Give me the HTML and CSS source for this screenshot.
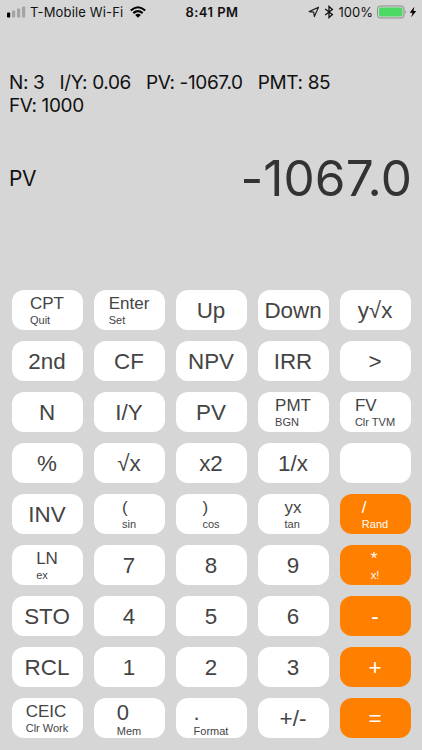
FILE: index.html
```html
<!DOCTYPE html>
<html lang="en">
<head>
<meta charset="utf-8">
<title>Calculator</title>
<link rel="stylesheet" href="styles.css">
</head>
<body>
<header class="status">
  <div class="side">
    <svg class="signal" width="20" height="12" viewBox="0 0 20 12"><rect x="1" y="6.5" width="3.2" height="5" rx=".8"/><g fill="#a4a4a4"><rect x="6" y="4.5" width="3.2" height="7" rx=".8"/><rect x="11" y="2.5" width="3.2" height="9" rx=".8"/><rect x="16" y=".5" width="3.2" height="11" rx=".8"/></g></svg>
    <span class="carrier">T-Mobile Wi-Fi</span>
    <svg class="wifi" width="16" height="12" viewBox="0 0 16 12"><g fill="none" stroke="#000" stroke-width="2.1"><path d="M.8 4.5Q8-2 15.2 4.5"/><path d="M3.3 7.1Q8 3 12.7 7.1"/></g><path d="M5.2 9Q8 6.6 10.8 9L8 11.7z"/></svg>
  </div>
  <time class="time">8:41 PM</time>
  <div class="side right">
    <svg class="location" width="12" height="12" viewBox="0 0 12 12"><path d="M10.5 1.2 1.2 5.6 5.7 6.1 6.4 10.6z" fill="none" stroke="#222" stroke-width="1.2" stroke-linejoin="round"/></svg>
    <svg class="bluetooth" width="10" height="14" viewBox="0 0 10 14"><path d="M1.2 4 8.4 9.6 5 12.6V1.4L8.4 4.4 1.2 10" fill="none" stroke="#111" stroke-width="1.3"/></svg>
    <span class="percent">100%</span>
    <svg class="battery" width="30" height="14" viewBox="0 0 30 14"><rect x=".5" y="1" width="26.5" height="12" rx="2.8" fill="none" stroke="#8b8b8b"/><rect x="2" y="2.5" width="23.5" height="9" rx="1.4" fill="#4cd964"/><path d="M28.2 5.2Q30 7 28.2 8.8z" fill="#8b8b8b"/></svg>
    <svg class="bolt" width="8" height="12" viewBox="0 0 8 12"><path d="M5.3.8.7 6.7h2.8L2.2 11.2 7.3 5H4.5z"/></svg>
  </div>
</header>
<section class="display">
  <div class="registers">
    <div class="line"><span>N: 3</span><span>I/Y: 0.06</span><span>PV: -1067.0</span><span>PMT: 85</span></div>
    <div class="line"><span>FV: 1000</span></div>
  </div>
  <div class="result"><span class="name">PV</span><output class="value">-1067.0</output></div>
</section>
<main class="keys">
  <button class="key"><span class="dual">CPT<small>Quit</small></span></button>
  <button class="key"><span class="dual">Enter<small>Set</small></span></button>
  <button class="key">Up</button>
  <button class="key">Down</button>
  <button class="key">y√x</button>
  <button class="key">2nd</button>
  <button class="key">CF</button>
  <button class="key">NPV</button>
  <button class="key">IRR</button>
  <button class="key">&gt;</button>
  <button class="key">N</button>
  <button class="key">I/Y</button>
  <button class="key">PV</button>
  <button class="key"><span class="dual">PMT<small>BGN</small></span></button>
  <button class="key"><span class="dual">FV<small>Clr TVM</small></span></button>
  <button class="key">%</button>
  <button class="key">√x</button>
  <button class="key">x2</button>
  <button class="key">1/x</button>
  <button class="key"></button>
  <button class="key">INV</button>
  <button class="key"><span class="dual">(<small>sin</small></span></button>
  <button class="key"><span class="dual">)<small>cos</small></span></button>
  <button class="key"><span class="dual">yx<small>tan</small></span></button>
  <button class="key op"><span class="dual">/<small>Rand</small></span></button>
  <button class="key"><span class="dual">LN<small>ex</small></span></button>
  <button class="key">7</button>
  <button class="key">8</button>
  <button class="key">9</button>
  <button class="key op"><span class="dual">*<small>x!</small></span></button>
  <button class="key">STO</button>
  <button class="key">4</button>
  <button class="key">5</button>
  <button class="key">6</button>
  <button class="key op">-</button>
  <button class="key">RCL</button>
  <button class="key">1</button>
  <button class="key">2</button>
  <button class="key">3</button>
  <button class="key op">+</button>
  <button class="key"><span class="dual">CEIC<small>Clr Work</small></span></button>
  <button class="key"><span class="dual big">0<small>Mem</small></span></button>
  <button class="key"><span class="dual big">.<small>Format</small></span></button>
  <button class="key">+/-</button>
  <button class="key op">=</button>
</main>
</body>
</html>
```
FILE: styles.css
```css
* { box-sizing: border-box; }
body {
  margin: 0;
  width: 422px;
  height: 750px;
  overflow: hidden;
  background: #d6d6d6;
  color: #111;
  font-family: Inter, "Liberation Sans", sans-serif;
}
svg { display: block; flex: none; }
.status {
  display: grid;
  grid-template-columns: 1fr auto 1fr;
  align-items: center;
  height: 24px;
  padding: 0 5px 0 6px;
  font-size: 13px;
  line-height: 24px;
  white-space: nowrap;
}
.side { display: flex; align-items: center; }
.right { justify-content: flex-end; }
.carrier { margin-left: 4px; letter-spacing: 0.15px; }
.wifi { margin-left: 7px; }
.time { font-weight: 600; letter-spacing: 0.45px; margin-left: 1px; }
.bluetooth { margin-left: 4px; }
.percent { margin-left: 5px; }
.battery { margin-left: 4px; }
.bolt { margin-left: 2px; }
.display { height: 266px; padding: 48px 11px 0 9px; }
.registers { height: 74px; padding-top: 0.4px; font-size: 19px; line-height: 22.4px; letter-spacing: -0.35px; }
.line { display: flex; gap: 15px; white-space: nowrap; }
.result { display: flex; align-items: center; justify-content: space-between; height: 64px; }
.name { font-size: 21px; letter-spacing: -0.5px; }
.value { font-size: 49.5px; letter-spacing: 0.1px; margin-right: -1px; color: #333335; }
.keys {
  display: grid;
  grid-template-columns: repeat(5, 71px);
  grid-auto-rows: 40px;
  gap: 11px;
  padding-left: 11.5px;
}
.key {
  display: flex;
  align-items: center;
  justify-content: center;
  padding: 2px 0 0;
  border: 0;
  border-radius: 12px;
  background: #fff;
  color: #444;
  font: 22.4px/26px "Liberation Sans", Arial, sans-serif;
  white-space: nowrap;
}
.op { background: #ff8000; color: #fff; }
.dual { display: block; text-align: left; font-size: 17px; line-height: 19px; margin-top: -2px; }
.dual small { display: block; font-size: 11px; line-height: 14px; }
.big { font-size: 22px; line-height: 22px; margin-top: 1px; }
```
